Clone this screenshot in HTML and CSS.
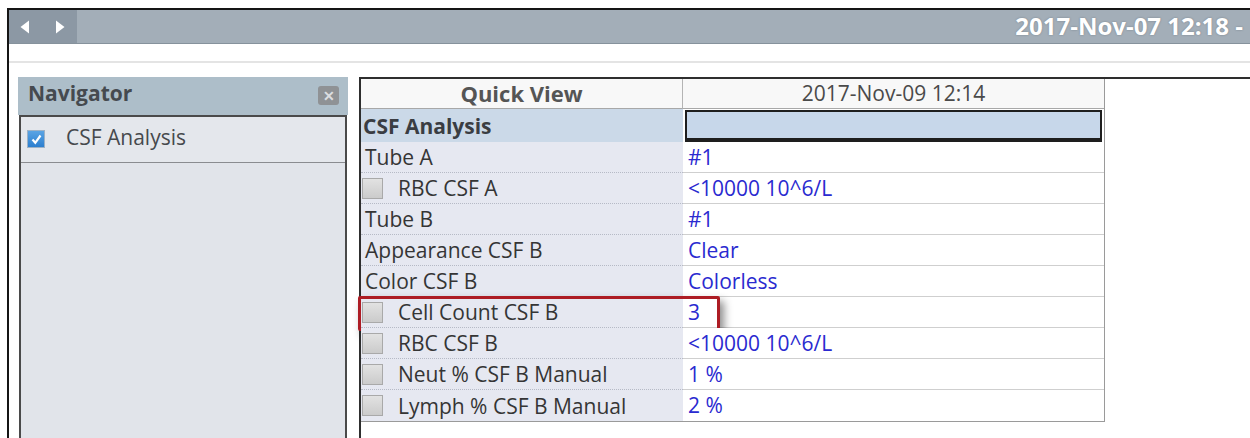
FILE: index.html
```html
<!DOCTYPE html>
<html lang="en">
<head>
<meta charset="utf-8">
<title>CSF Analysis – Quick View</title>
<link rel="stylesheet" href="styles.css">
</head>
<body>
<div class="app">
  <header class="topbar">
    <div class="history">
      <svg class="arrow" width="10" height="14" viewBox="0 0 10 14"><path d="M9 0.5 L0.5 7 L9 13.5 Z" fill="#fff"/></svg>
      <svg class="arrow" width="10" height="14" viewBox="0 0 10 14"><path d="M1 0.5 L9.5 7 L1 13.5 Z" fill="#fff"/></svg>
    </div>
    <div class="title">2017-Nov-07 12:18 -</div>
  </header>
  <div class="strip"></div>

  <main class="workspace">
    <section class="navigator">
      <div class="nav-head">
        <span class="nav-title">Navigator</span>
        <span class="close">&#x2715;</span>
      </div>
      <div class="nav-body">
        <div class="nav-item">
          <span class="check checked">
            <svg width="13" height="13" viewBox="0 0 13 13"><path d="M2.5 6.5 L5.3 9.8 L10.5 2.5" fill="none" stroke="#fff" stroke-width="2.2"/></svg>
          </span>
          <span>CSF Analysis</span>
        </div>
      </div>
    </section>

    <section class="pane">
      <div class="grid">
        <div class="row head">
          <div class="c1">Quick View</div>
          <div class="c2">2017-Nov-09 12:14</div>
        </div>
        <div class="row section">
          <div class="c1">CSF Analysis</div>
          <div class="c2"><div class="selected"></div></div>
        </div>
        <div class="row">
          <div class="c1 label">Tube A</div>
          <div class="c2 value">#1</div>
        </div>
        <div class="row">
          <div class="c1 label boxed"><span class="box"></span>RBC CSF A</div>
          <div class="c2 value">&lt;10000 10^6/L</div>
        </div>
        <div class="row">
          <div class="c1 label">Tube B</div>
          <div class="c2 value">#1</div>
        </div>
        <div class="row">
          <div class="c1 label">Appearance CSF B</div>
          <div class="c2 value">Clear</div>
        </div>
        <div class="row">
          <div class="c1 label">Color CSF B</div>
          <div class="c2 value">Colorless</div>
        </div>
        <div class="row">
          <div class="c1 label boxed"><span class="box"></span>Cell Count CSF B</div>
          <div class="c2 value">3</div>
          <div class="highlight"></div>
        </div>
        <div class="row">
          <div class="c1 label boxed"><span class="box"></span>RBC CSF B</div>
          <div class="c2 value">&lt;10000 10^6/L</div>
        </div>
        <div class="row">
          <div class="c1 label boxed"><span class="box"></span>Neut % CSF B Manual</div>
          <div class="c2 value">1 %</div>
        </div>
        <div class="row last">
          <div class="c1 label boxed"><span class="box"></span>Lymph % CSF B Manual</div>
          <div class="c2 value">2 %</div>
        </div>
      </div>
    </section>
  </main>
</div>
</body>
</html>
```

FILE: styles.css
```css
html, body {
  margin: 0;
  padding: 0;
  background: #fff;
  overflow: hidden;
}

body {
  font-family: "Open Sans", "Noto Sans", sans-serif;
  color: #3a3a3a;
}

.app {
  margin: 8px 0 0 7px;
  border-left: 2px solid #151515;
  border-top: 2px solid #151515;
  height: 430px;
}

/* title bar */
.topbar {
  display: flex;
  height: 33px;
  border-bottom: 1px solid #86929c;
  background: #a3aeb8;
}

.history {
  width: 68px;
  background: #8c98a4;
  display: flex;
  align-items: center;
  gap: 25px;
  padding-left: 11px;
  box-sizing: border-box;
}

.arrow {
  display: block;
}

.title {
  flex: 1;
  text-align: right;
  padding-right: 7px;
  color: #fff;
  font-weight: 700;
  font-size: 24px;
  line-height: 32px;
  white-space: nowrap;
  text-shadow: 0 0 2px rgba(60, 70, 80, 0.45);
}

.strip {
  height: 17px;
  border-bottom: 2px solid #e4e4e4;
  margin-bottom: 14px;
}

/* work area */
.workspace {
  display: flex;
  gap: 11px;
  padding-left: 9px;
  height: 361px;
}

.navigator {
  width: 330px;
  display: flex;
  flex-direction: column;
}

.nav-head {
  height: 38px;
  background: #adbec9;
  display: flex;
  align-items: center;
  justify-content: space-between;
  padding: 0 9px 0 10px;
}

.nav-title {
  font-weight: 700;
  font-size: 21px;
  color: #454a4f;
  line-height: 1;
  margin-top: -6px;
}

.close {
  width: 21px;
  height: 19px;
  border-radius: 3px;
  background: #8f9295;
  color: #dcdee0;
  font-size: 14px;
  font-weight: 700;
  line-height: 19px;
  text-align: center;
  margin-top: -2px;
}

.nav-body {
  flex: 1;
  margin: 0 1px;
  border: 2px solid #4a4a4a;
  border-bottom: none;
  background: #e1e4ea;
}

.nav-item {
  height: 46px;
  border-bottom: 1px solid #8a8c90;
  background: #e4e7ec;
  display: flex;
  align-items: flex-start;
  padding: 8px 0 0 6px;
  box-sizing: border-box;
  gap: 21px;
  font-size: 21px;
  line-height: 24px;
  color: #46494d;
}

.check {
  width: 18px;
  height: 18px;
  margin-top: 5px;
  box-sizing: border-box;
  border: 1px solid #9db2c6;
  flex: none;
}

.check.checked {
  background: linear-gradient(#5aa4e4, #2c7fcf);
  display: flex;
  align-items: center;
  justify-content: center;
}

/* quick view pane */
.pane {
  flex: 1;
  border-left: 2px solid #2e2e2e;
  border-top: 2px solid #2e2e2e;
}

.grid {
  width: 743px;
  border-right: 1px solid #9a9a9a;
  border-bottom: 1px solid #9a9a9a;
}

.row {
  position: relative;
  display: grid;
  grid-template-columns: 322px 421px;
  height: 31px;
  font-size: 21px;
  line-height: 30px;
}

.row .c1,
.row .c2 {
  white-space: nowrap;
  overflow: hidden;
}

.row.head {
  height: 30px;
}

.head .c1,
.head .c2 {
  text-align: center;
  background: #f8f8f8;
  border-bottom: 1px solid #a8a8a8;
  line-height: 28px;
}

.head .c1 {
  font-weight: 700;
  font-size: 22px;
  color: #555;
  border-right: 1px solid #b4b4b4;
}

.head .c2 {
  color: #4a4a4a;
}

.row.section {
  height: 33px;
}

.section .c1 {
  background: #cbd9e8;
  font-weight: 700;
  color: #3a3d42;
  padding-left: 2px;
  line-height: 34px;
}

.section .c2 {
  background: #fff;
  padding: 1px 2px 0;
}

.selected {
  height: 32px;
  box-sizing: border-box;
  border: 2px solid #1e1e1e;
  border-bottom-width: 4px;
  background: #c7d7ea;
}

.label {
  background: #e6e8f1;
  border-bottom: 1px dotted #b6bac6;
  padding-left: 4px;
  display: flex;
  align-items: center;
  color: #353535;
}

.label.boxed {
  padding-left: 1px;
}

.box {
  width: 21px;
  height: 21px;
  box-sizing: border-box;
  border: 1px solid #a9a9a9;
  background: linear-gradient(#e2e2e2, #cbcbcb);
  margin-right: 15px;
  flex: none;
}

.value {
  background: #fff;
  border-bottom: 1px solid #cfcfcf;
  padding-left: 5px;
  color: #2a2ad0;
}

.row.last .label,
.row.last .value {
  border-bottom: none;
}

/* call-out frame around the cell count row */
.highlight {
  position: absolute;
  left: -3px;
  top: -1px;
  width: 362px;
  height: 35px;
  box-sizing: border-box;
  border: 3px solid #ad1c24;
  border-radius: 2px;
  box-shadow: 4px 5px 8px rgba(0, 0, 0, 0.45);
  pointer-events: none;
}
```
